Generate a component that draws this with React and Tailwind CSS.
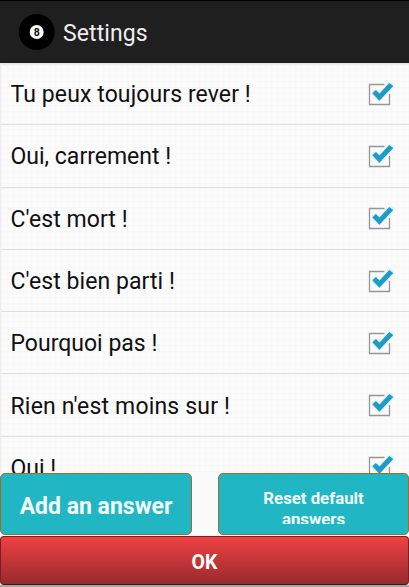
const answers = [
  { text: "Tu peux toujours rever !", spacing: "tracking-[0.1px]" },
  { text: "Oui, carrement !", spacing: "tracking-[0px]" },
  { text: "C'est mort !", spacing: "tracking-[0.06px]" },
  { text: "C'est bien parti !", spacing: "tracking-[0.07px]" },
  { text: "Pourquoi pas !", spacing: "tracking-[0px]" },
  { text: "Rien n'est moins sur !", spacing: "tracking-[0.18px]" },
  { text: "Oui !", spacing: "tracking-[0px]" },
];

function Checkbox() {
  return (
    <svg width="30" height="30" viewBox="0 0 30 30" className="shrink-0">
      <path d="M20.5 5.5H5.5V25.5H25.5V15" fill="none" stroke="#96969a" strokeWidth="1.3" />
      <path d="M11 14.5L15 18.5L26.5 6.5" fill="none" stroke="#c4e9f5" strokeWidth="7" strokeLinejoin="round" strokeLinecap="round" opacity="0.45" />
      <path d="M8.3 14.3L11.9 11.1L15.6 14.4L25.2 3.9L29.3 7L15.4 21.8Z" fill="#1c9cc6" />
    </svg>
  );
}

function Row({ text, spacing }) {
  return (
    <li className="flex h-[62.3px] shrink-0 items-center justify-between border-b border-[#dedee0] pl-[9.5px] pr-[15px]">
      <span className={`whitespace-nowrap pt-[2px] text-[23px] leading-none text-[#101010] ${spacing}`}>{text}</span>
      <Checkbox />
    </li>
  );
}

export default function App() {
  return (
    <div className="flex h-[587px] w-[409px] flex-col overflow-hidden bg-[#fbfbfc] font-['Roboto','Liberation_Sans',sans-serif]">
      <header className="flex h-[63px] shrink-0 items-center border-t border-black bg-[#1f1f1f] pl-[18px]">
        <svg width="38" height="38" viewBox="0 0 38 38">
          <circle cx="18.7" cy="19" r="18" fill="#000" />
          <circle cx="18.7" cy="19" r="7" fill="#fff" />
          <text x="18.7" y="22.8" textAnchor="middle" fontSize="10.5" fontWeight="700" fill="#111">8</text>
        </svg>
        <h1 className="ml-[7px] pt-[2px] text-[23px] leading-none tracking-[0.1px] text-[#eeeeee]">Settings</h1>
      </header>
      <ul className="flex h-[410px] shrink-0 flex-col overflow-hidden border-l border-[#ededee] bg-[linear-gradient(to_right,#f8f8f9_1px,transparent_1px),linear-gradient(#f8f8f9_1px,transparent_1px)] bg-[length:6px_6px] shadow-[inset_0_3px_3px_-2px_#d8d8da]">
        {answers.map((a) => (
          <Row key={a.text} text={a.text} spacing={a.spacing} />
        ))}
      </ul>
      <div className="flex h-[62px] shrink-0 justify-between">
        <button className="h-[62px] w-[192px] rounded-[5px] border-[1.5px] border-[#a96a20] bg-[#21b6c4] pt-[5px] text-[23px] font-bold leading-none text-[#f3fcfd]">
          Add an answer
        </button>
        <button className="flex h-[62px] w-[191px] items-start justify-center rounded-[5px] border-[1.5px] border-[#a96a20] bg-[#21b6c4] pt-[14px] text-[16.8px] font-bold leading-[20.5px] text-[#f3fcfd]">
          <span className="block h-[36px] w-[120px] overflow-hidden">Reset default answers</span>
        </button>
      </div>
      <button className="mt-px h-[49px] shrink-0 rounded-[4px] border border-[#781f23] border-b-[#35181a] bg-linear-to-b from-[#f04143] to-[#982b2e] pt-[4px] text-[19.5px] font-bold leading-none text-white">
        OK
      </button>
      <div className="h-[2px] bg-[#aaa5a6]" />
    </div>
  );
}
